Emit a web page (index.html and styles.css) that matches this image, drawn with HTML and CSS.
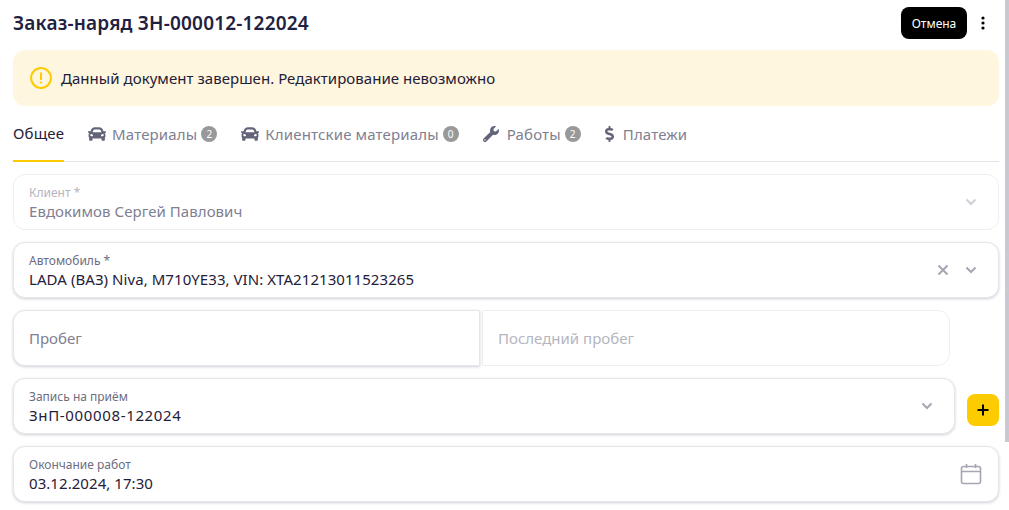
FILE: index.html
```html
<!DOCTYPE html>
<html lang="ru">
<head>
    <meta charset="UTF-8">
    <title>Заказ-наряд</title>
    <link rel="stylesheet" href="styles.css">
</head>
<body>
    <div class="scrollThumb"></div>
    <div class="page">
        <header class="head">
            <h1 class="title">Заказ-наряд ЗН-000012-122024</h1>
            <button class="cancelBtn" type="button">Отмена</button>
            <button class="moreBtn" type="button" aria-label="Ещё">
                <svg width="4" height="14" viewBox="0 0 4 14"><circle cx="2" cy="2" r="1.6"/><circle cx="2" cy="7" r="1.6"/><circle cx="2" cy="12" r="1.6"/></svg>
            </button>
        </header>

        <div class="alert">
            <svg width="22" height="22" viewBox="0 0 22 22" fill="none" stroke="#fdcc00"><circle cx="11" cy="11" r="9.9" stroke-width="2"/><path d="M11 6.2v6" stroke-width="2" stroke-linecap="round"/><circle cx="11" cy="15.6" r="1.1" fill="#fdcc00" stroke="none"/></svg>
            <span>Данный документ завершен. Редактирование невозможно</span>
        </div>

        <nav class="tabs">
            <a class="tab active">Общее</a>
            <a class="tab">
                <svg class="tabIcon" width="18" height="18" viewBox="0 0 512 512"><path d="M499.99 176h-59.87l-16.64-41.6C406.38 91.63 365.57 64 319.5 64h-127c-46.06 0-86.88 27.63-103.99 70.4L71.87 176H12.01C4.2 176-1.53 183.34.37 190.91l6 24C7.7 220.25 12.5 224 18.01 224h20.07C24.65 235.73 16 252.78 16 272v48c0 16.12 6.16 30.67 16 41.93V416c0 17.67 14.33 32 32 32h32c17.67 0 32-14.33 32-32v-32h256v32c0 17.67 14.33 32 32 32h32c17.67 0 32-14.33 32-32v-54.07c9.84-11.25 16-25.8 16-41.93v-48c0-19.22-8.65-36.27-22.07-48H494c5.51 0 10.31-3.75 11.64-9.09l6-24c1.89-7.57-3.84-14.91-11.65-14.91zm-352.06-17.83c7.29-18.22 24.94-30.17 44.57-30.17h127c19.63 0 37.28 11.95 44.57 30.17L384 208H128l19.93-49.83zM96 319.8c-19.2 0-32-12.76-32-31.9S76.8 256 96 256s48 28.71 48 47.85-28.8 15.95-48 15.95zm320 0c-19.2 0-48 3.19-48-15.95S396.8 256 416 256s32 12.76 32 31.9-12.8 31.9-32 31.9z"/></svg>
                Материалы <span class="badge">2</span>
            </a>
            <a class="tab">
                <svg class="tabIcon" width="18" height="18" viewBox="0 0 512 512"><path d="M499.99 176h-59.87l-16.64-41.6C406.38 91.63 365.57 64 319.5 64h-127c-46.06 0-86.88 27.63-103.99 70.4L71.87 176H12.01C4.2 176-1.53 183.34.37 190.91l6 24C7.7 220.25 12.5 224 18.01 224h20.07C24.65 235.73 16 252.78 16 272v48c0 16.12 6.16 30.67 16 41.93V416c0 17.67 14.33 32 32 32h32c17.67 0 32-14.33 32-32v-32h256v32c0 17.67 14.33 32 32 32h32c17.67 0 32-14.33 32-32v-54.07c9.84-11.25 16-25.8 16-41.93v-48c0-19.22-8.65-36.27-22.07-48H494c5.51 0 10.31-3.75 11.64-9.09l6-24c1.89-7.57-3.84-14.91-11.65-14.91zm-352.06-17.83c7.29-18.22 24.94-30.17 44.57-30.17h127c19.63 0 37.28 11.95 44.57 30.17L384 208H128l19.93-49.83zM96 319.8c-19.2 0-32-12.76-32-31.9S76.8 256 96 256s48 28.71 48 47.85-28.8 15.95-48 15.95zm320 0c-19.2 0-48 3.19-48-15.95S396.8 256 416 256s32 12.76 32 31.9-12.8 31.9-32 31.9z"/></svg>
                Клиентские материалы <span class="badge">0</span>
            </a>
            <a class="tab wide">
                <svg class="tabIcon" width="16" height="16" viewBox="0 0 512 512"><path d="M507.73 109.1c-2.24-9.03-13.54-12.09-20.12-5.51l-74.36 74.36-67.88-11.31-11.31-67.88 74.36-74.36c6.62-6.62 3.43-17.9-5.66-20.16-47.38-11.74-99.55.91-136.58 37.93-39.64 39.64-50.55 97.1-34.05 147.2L18.74 402.76c-24.99 24.99-24.99 65.51 0 90.5 24.99 24.99 65.51 24.99 90.5 0l213.21-213.21c50.12 16.71 107.47 5.68 147.37-34.22 37.07-37.07 49.7-89.32 37.91-136.73zM64 472c-13.25 0-24-10.75-24-24 0-13.26 10.75-24 24-24s24 10.74 24 24c0 13.25-10.75 24-24 24z"/></svg>
                Работы <span class="badge">2</span>
            </a>
            <a class="tab wide">
                <svg class="tabIcon" width="10" height="16" viewBox="0 0 320 512"><path d="M209.2 233.4l-108-31.6C88.7 198.2 80 186.5 80 173.5c0-16.3 13.2-29.5 29.5-29.5h66.3c12.2 0 24.2 3.7 34.2 10.5 6.1 4.1 14.3 3.1 19.5-2l34.8-34c7.1-6.9 6.1-18.4-1.8-24.5C238 74.8 207.4 64.1 176 64V16c0-8.8-7.2-16-16-16h-32c-8.8 0-16 7.2-16 16v48h-2.5C45.8 64-5.4 118.7.5 183.6c4.2 46.1 39.4 83.6 83.8 96.6l102.5 30c12.5 3.7 21.2 15.3 21.2 28.3 0 16.3-13.2 29.5-29.5 29.5h-66.3C100 368 88 364.3 78 357.5c-6.1-4.1-14.3-3.1-19.5 2l-34.8 34c-7.1 6.9-6.1 18.4 1.8 24.5 24.5 19.2 55.1 29.9 86.5 30v48c0 8.8 7.2 16 16 16h32c8.8 0 16-7.2 16-16v-48.2c46.6-.9 90.3-28.6 105.7-72.7 21.5-61.6-14.6-124.8-72.5-141.7z"/></svg>
                Платежи
            </a>
        </nav>

        <div class="fields">
            <div class="field disabled">
                <div class="fieldText">
                    <label>Клиент *</label>
                    <p class="value">Евдокимов Сергей Павлович</p>
                </div>
                <svg class="chevron" width="12" height="8" viewBox="0 0 12 8"><path d="M1.5 1.5 6 6l4.5-4.5"/></svg>
            </div>

            <div class="field">
                <div class="fieldText">
                    <label>Автомобиль *</label>
                    <p class="value">LADA (ВАЗ) Niva, M710YE33, VIN: XTA21213011523265</p>
                </div>
                <svg class="clear" width="12" height="12" viewBox="0 0 12 12"><path d="M1.5 1.5l9 9M10.5 1.5l-9 9"/></svg>
                <svg class="chevron" width="12" height="8" viewBox="0 0 12 8"><path d="M1.5 1.5 6 6l4.5-4.5"/></svg>
            </div>

            <div class="mileageRow">
                <div class="field plain left"><span class="placeholder">Пробег</span></div>
                <div class="field plain flat right"><span class="placeholder light">Последний пробег</span></div>
            </div>

            <div class="bookingRow">
                <div class="field">
                    <div class="fieldText">
                        <label>Запись на приём</label>
                        <p class="value number">ЗнП-000008-122024</p>
                    </div>
                    <svg class="chevron" width="12" height="8" viewBox="0 0 12 8"><path d="M1.5 1.5 6 6l4.5-4.5"/></svg>
                </div>
                <button class="addBtn" type="button" aria-label="Добавить">
                    <svg width="14" height="14" viewBox="0 0 14 14"><path d="M7 1.5v11M1.5 7h11"/></svg>
                </button>
            </div>

            <div class="field">
                <div class="fieldText">
                    <label>Окончание работ</label>
                    <p class="value">03.12.2024, 17:30</p>
                </div>
                <svg class="calendar" width="22" height="22" viewBox="0 0 22 22"><rect x="1.5" y="3.5" width="19" height="17" rx="2"/><path d="M1.5 8.5h19M6.5 1v4M15.5 1v4"/></svg>
            </div>
        </div>
    </div>
</body>
</html>
```

FILE: styles.css
```css
html, body{
    margin: 0;
    padding: 0;
    height: 100%;
    overflow: hidden;
    background: white;
}

body{
    position: relative;
    font-family: "Noto Sans", sans-serif;
    color: #1f2039;
}

.page{
    box-sizing: border-box;
    width: 1009px;
    padding: 7px 10px 0 13px;
}

.scrollThumb{
    position: absolute;
    top: 0;
    right: 0;
    width: 4px;
    height: 442px;
    background: #c9c9d1;
}

.head{
    display: flex;
    align-items: center;
    height: 32px;
}

.title{
    margin: 0;
    margin-right: auto;
    font-size: 19px;
    font-weight: 600;
    letter-spacing: 0.18px;
    color: #1f2140;
}

.cancelBtn{
    height: 32px;
    width: 66px;
    padding: 0;
    border: 0;
    border-radius: 8px;
    background: black;
    color: white;
    font: 12px "Noto Sans", sans-serif;
    cursor: pointer;
}

.moreBtn{
    display: flex;
    justify-content: center;
    width: 32px;
    padding: 0;
    border: 0;
    background: none;
}

.alert{
    display: flex;
    align-items: center;
    gap: 9px;
    height: 56px;
    margin-top: 11px;
    padding-left: 17px;
    border-radius: 12px;
    background: #fef6de;
    font-size: 15px;
    letter-spacing: 0.04px;
}

.tabs{
    display: flex;
    gap: 24px;
    height: 55px;
    border-bottom: 1px solid #e4e4e8;
}

.tab{
    display: flex;
    align-items: center;
    gap: 6px;
    box-sizing: border-box;
    height: 55px;
    font-size: 15px;
    letter-spacing: 0.15px;
    color: #7f8091;
    white-space: nowrap;
}

.tab.wide{
    gap: 8px;
}

.tab.active{
    color: #1f2039;
    border-bottom: 2px solid #fdcc00;
    height: 56px;
}

.tabIcon{
    fill: #636479;
}

.badge{
    display: flex;
    align-items: center;
    justify-content: center;
    width: 16px;
    height: 16px;
    margin-left: -2px;
    border-radius: 50%;
    background: #999;
    color: white;
    font-size: 10px;
}

.wide .badge{
    margin-left: -4px;
}

.fields{
    display: flex;
    flex-direction: column;
    gap: 12px;
    margin-top: 12px;
}

.field{
    display: flex;
    align-items: center;
    box-sizing: border-box;
    height: 56px;
    padding: 0 21px 0 15px;
    border: 1px solid #e6e6ea;
    border-radius: 12px;
    box-shadow: 0 1px 3px rgba(30, 30, 60, 0.2);
    background: white;
}

.field.disabled{
    box-shadow: none;
    border-color: #efeff2;
}

.fieldText{
    flex: 1;
    padding-top: 2px;
}

.fieldText label{
    display: block;
    font-size: 12px;
    line-height: 16px;
    color: #6c6d80;
}

.value{
    margin: 0;
    font-size: 15px;
    line-height: 20px;
    letter-spacing: 0.06px;
    color: #1f2039;
}

.value.number{
    letter-spacing: 0.65px;
}

.disabled label{
    color: #b5b5c0;
}

.disabled .value{
    color: #7f8091;
}

.chevron, .clear{
    fill: none;
    stroke: #a6a6b3;
    stroke-width: 2;
}

.disabled .chevron{
    stroke: #d0d0d8;
}

.clear{
    margin-right: 16px;
}

.calendar{
    fill: none;
    stroke: #a6a6b3;
    stroke-width: 1.6;
    margin-right: -5px;
}

.mileageRow{
    display: flex;
    gap: 2px;
    width: 937px;
}

.field.left{
    width: 467px;
    border-radius: 12px 0 0 12px;
}

.field.right{
    flex: 1;
    border-radius: 0 12px 12px 0;
}

.field.flat{
    box-shadow: none;
    border-color: #efeff2;
}

.placeholder{
    font-size: 15px;
    color: #7f8091;
}

.placeholder.light{
    color: #b5b5c0;
}

.bookingRow{
    display: flex;
    gap: 12px;
}

.bookingRow .field{
    flex: 1;
}

.addBtn{
    display: flex;
    align-items: center;
    justify-content: center;
    align-self: flex-end;
    width: 32px;
    height: 32px;
    margin-bottom: 8px;
    padding: 0;
    border: 0;
    border-radius: 8px;
    background: #fdcc00;
}

.addBtn svg{
    fill: none;
    stroke: black;
    stroke-width: 2;
}
```
